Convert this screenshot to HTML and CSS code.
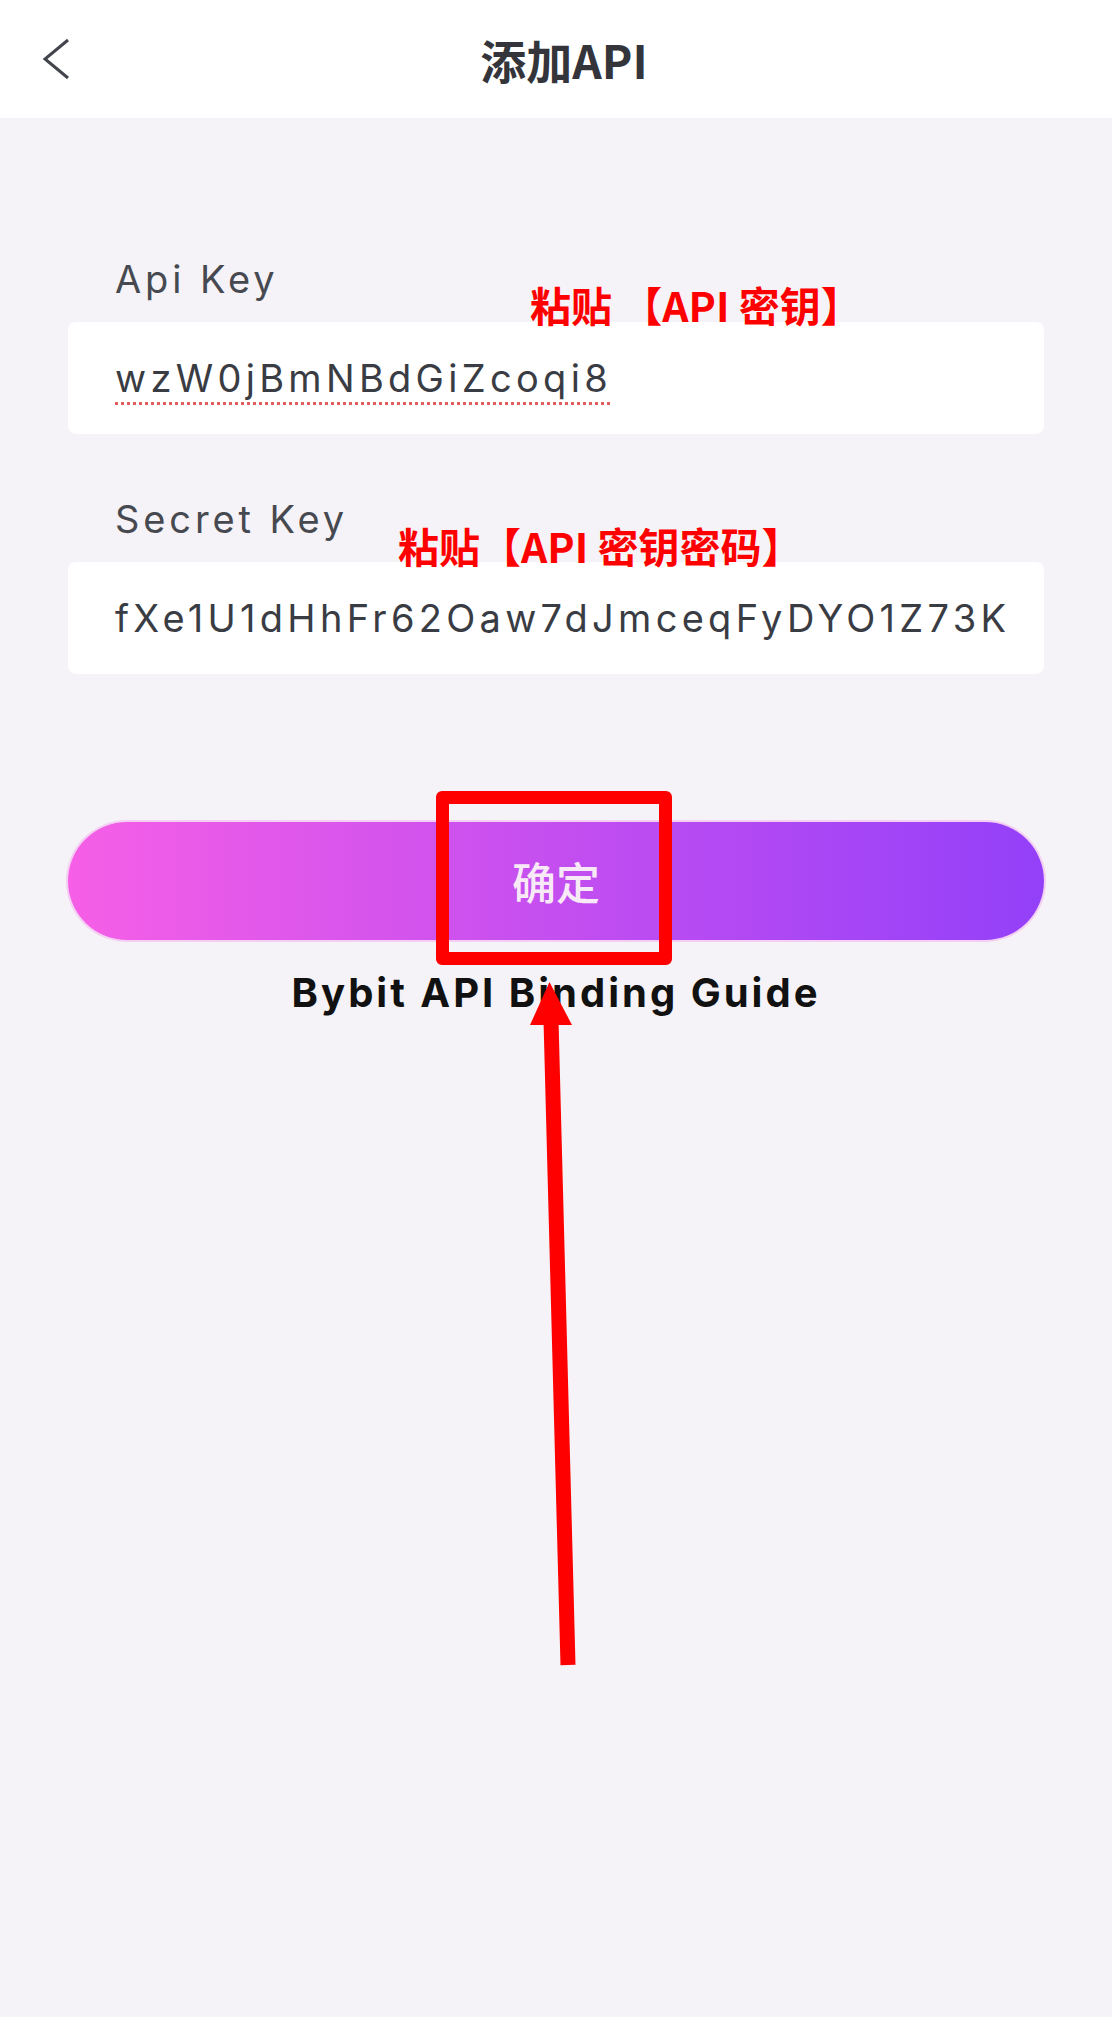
FILE: index.html
```html
<!DOCTYPE html>
<html>
<head>
    <meta charset="utf-8">
    <title>添加API</title>
    <link rel="stylesheet" href="styles.css">
</head>
<body>
    <div class="page">
        <header class="topbar">
            <div class="back">
                <svg width="30" height="42" viewBox="0 0 30 42">
                    <polyline points="26,2 3,21 26,40" fill="none" stroke="#43454c" stroke-width="3" stroke-linejoin="miter"/>
                </svg>
            </div>
            <h1 class="title">添加API</h1>
            <div></div>
        </header>

        <main class="form">
            <div class="field">
                <label class="field-label">Api Key</label>
                <span class="hint hint-key">粘贴 【API 密钥】</span>
                <div class="field-input"><span class="typo">wzW0jBmNBdGiZcoqi8</span></div>
            </div>

            <div class="field">
                <label class="field-label">Secret Key</label>
                <span class="hint hint-secret">粘贴【API 密钥密码】</span>
                <div class="field-input">fXe1U1dHhFr62Oaw7dJmceqFyDYO1Z73K</div>
            </div>

            <button class="submit">确定</button>
            <div class="guide">Bybit API Binding Guide</div>
        </main>

        <!-- red annotation marks drawn over the screen -->
        <div class="mark-box"></div>
        <svg class="mark-arrow" width="1112" height="2017" viewBox="0 0 1112 2017">
            <line x1="568" y1="1665" x2="551" y2="1020" stroke="#ff0000" stroke-width="15"/>
            <polygon points="549.5,982 530,1025 572,1025" fill="#ff0000"/>
        </svg>
    </div>
</body>
</html>
```

FILE: styles.css
```css
body {
    margin: 0;
    background: #f5f3f7;
    font-family: Inter, "Noto Sans CJK SC", sans-serif;
}

.page {
    position: relative;
    min-height: 2017px;
}

.topbar {
    height: 118px;
    background: #fff;
    display: grid;
    grid-template-columns: 112px 1fr 112px;
    align-items: center;
}

.back {
    padding-left: 42px;
    display: flex;
    align-items: center;
}

.title {
    margin: 0;
    padding-left: 16px;
    text-align: center;
    font-family: "Noto Sans CJK SC", sans-serif;
    font-size: 46px;
    font-weight: 700;
    color: #33353b;
}

.form {
    padding: 137px 68px 0;
}

.field {
    position: relative;
    margin-bottom: 61px;
}

.field-label {
    display: block;
    padding-left: 47px;
    margin-bottom: 19px;
    font-size: 38px;
    line-height: 48px;
    letter-spacing: 3.9px;
    color: #474951;
}

.field-input {
    height: 112px;
    display: flex;
    align-items: center;
    padding-left: 47px;
    background: #fff;
    border-radius: 8px;
    font-size: 38px;
    letter-spacing: 4.3px;
    color: #3a3c44;
    white-space: nowrap;
}

.typo {
    text-decoration: underline dotted #e06060;
    text-decoration-thickness: 3px;
    text-underline-offset: 10px;
}

.hint {
    position: absolute;
    font-family: "Noto Sans CJK SC", sans-serif;
    font-size: 41px;
    font-weight: 700;
    line-height: 40px;
    color: #ff0000;
    white-space: pre;
}

.hint-key {
    top: 29px;
    left: 462px;
}

.hint-secret {
    top: 30px;
    left: 330px;
}

.submit {
    display: block;
    width: 100%;
    height: 118px;
    margin-top: 148px;
    border: none;
    border-radius: 59px;
    background: linear-gradient(90deg, #f65fe6 0%, #c950ef 45%, #9340f9 100%);
    box-shadow: 0 0 0 2px rgba(245, 170, 240, 0.5);
    font-family: "Noto Sans CJK SC", sans-serif;
    font-size: 44px;
    font-weight: 500;
    color: #f8e9f7;
}

.guide {
    margin-top: 29px;
    text-align: center;
    font-size: 40px;
    font-weight: 700;
    line-height: 48px;
    letter-spacing: 3px;
    color: #111;
}

.mark-box {
    position: absolute;
    left: 436px;
    top: 791px;
    width: 236px;
    height: 174px;
    box-sizing: border-box;
    border: 13px solid #ff0000;
    border-radius: 6px;
}

.mark-arrow {
    position: absolute;
    left: 0;
    top: 0;
    pointer-events: none;
}
```
